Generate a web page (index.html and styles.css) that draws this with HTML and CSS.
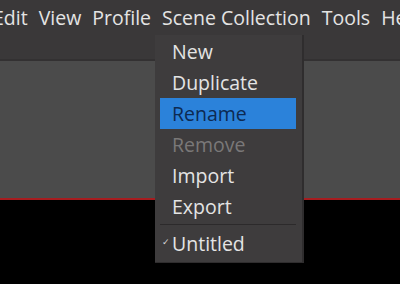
FILE: index.html
```html
<!DOCTYPE html>
<html lang="en">
<head>
    <meta charset="UTF-8">
    <title>Scene Collection</title>
    <link rel="stylesheet" href="styles.css">
</head>
<body>

    <div class="menubar">
        <span class="menu-item">Edit</span>
        <span class="menu-item">View</span>
        <span class="menu-item">Profile</span>
        <span class="menu-item open">Scene Collection</span>
        <span class="menu-item">Tools</span>
        <span class="menu-item">Help</span>
    </div>

    <div class="toolbar-gap"></div>
    <div class="panel"></div>
    <div class="preview"></div>

    <!-- dropdown for Scene Collection -->
    <div class="dropdown">
        <div class="dropdown-item">New</div>
        <div class="dropdown-item">Duplicate</div>
        <div class="dropdown-item active">Rename</div>
        <div class="dropdown-item disabled">Remove</div>
        <div class="dropdown-item">Import</div>
        <div class="dropdown-item">Export</div>
        <div class="dropdown-sep"></div>
        <div class="dropdown-item checked"><span class="check">&#10003;</span>Untitled</div>
    </div>

</body>
</html>
```

FILE: styles.css
```css
body {
    margin: 0;
    padding: 0;
    background-color: #3a3839;
    font-family: 'Open Sans', 'Noto Sans', sans-serif;
    color: #e4e4e4;
    height: 284px;
    overflow: hidden;
    position: relative;
}

.menubar {
    display: flex;
    height: 34px;
    align-items: center;
    margin-left: -12px;
    font-size: 19.5px;
    white-space: nowrap;
}

.menu-item {
    padding: 0 5px;
    margin-right: 1px;
}

.toolbar-gap {
    height: 25px;
    border-bottom: 2px solid #333132;
}

.panel {
    height: 137px;
    background-color: #4b4b4b;
    border-bottom: 2px solid #a71c1f;
}

.preview {
    height: 84px;
    background-color: #000;
}

.dropdown {
    position: absolute;
    left: 155px;
    top: 35px;
    width: 136px;
    padding: 1px 6px 3px 5px;
    background-color: #3e3c3d;
    border-right: 2px solid #2f2d2e;
    border-bottom: 1px solid #2f2d2e;
    font-size: 19.5px;
}

.dropdown-item {
    height: 31px;
    line-height: 31px;
    padding-left: 12px;
    position: relative;
}

.dropdown-item.active {
    background-color: #2b82da;
    color: #0d2a52;
}

.dropdown-item.disabled {
    color: #7a7878;
}

.dropdown-sep {
    height: 1px;
    background-color: #2c2a2b;
    margin: 2px 0 3px 0;
}

.check {
    position: absolute;
    left: 2px;
    top: -2px;
    font-size: 9px;
    color: #d8d8d8;
}
```
